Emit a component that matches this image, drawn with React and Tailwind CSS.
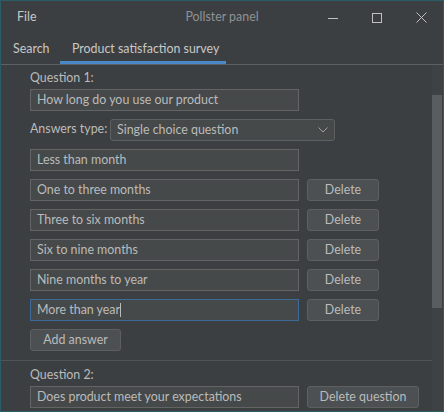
import React from "react";

const answers = [
  { text: "Less than month", del: false },
  { text: "One to three months", del: true },
  { text: "Three to six months", del: true },
  { text: "Six to nine months", del: true },
  { text: "Nine months to year", del: true },
  { text: "More than year", del: true, focus: true },
];

const inputCls = "h-[22px] w-[269px] shrink-0 border bg-[#45494a] px-[6px] flex items-center text-[#bbbbbb]";
const btnCls = "h-[22px] shrink-0 rounded-[3px] border border-[#5e6060] bg-[#4c5052] flex items-center justify-center text-[#bbbbbb]";

function Field({ children, focus }) {
  return (
    <div className={`${inputCls} ${focus ? "border-[#3d6a99]" : "border-[#646464]"}`}>
      {children}
      {focus && <span className="w-px h-[14px] bg-[#bbbbbb]" />}
    </div>
  );
}

export default function App() {
  return (
    <div
      className="w-[444px] h-[412px] border border-[#2b5d66] bg-[#3c3f41] text-[#bbbbbb] text-[12.4px] whitespace-nowrap flex flex-col overflow-hidden"
      style={{ fontFamily: 'Lato, "Noto Sans", sans-serif' }}
    >
      {/* title bar */}
      <div className="h-[33px] grid grid-cols-[1fr_auto_1fr] items-center">
        <div className="pl-[16px] text-[#c8c8c8]">File</div>
        <div className="text-[#8f9294]">Pollster panel</div>
        <div className="flex justify-end items-center pr-[16px] gap-[34px]">
          <svg width="10" height="10" viewBox="0 0 10 10"><path d="M0 5.5h10" stroke="#c0c0c0" strokeWidth="1" /></svg>
          <svg width="10" height="10" viewBox="0 0 10 10"><rect x="0.5" y="0.5" width="9" height="9" fill="none" stroke="#c0c0c0" /></svg>
          <svg width="11" height="11" viewBox="0 0 11 11"><path d="M0.5 0.5l10 10M10.5 0.5l-10 10" stroke="#c0c0c0" /></svg>
        </div>
      </div>

      {/* tabs */}
      <div className="h-[31px] flex border-b border-[#5d6063]">
        <div className="pl-[12px] w-[59px] flex items-center text-[#c8c8c8]">Search</div>
        <div className="w-[166px] pl-[12px] flex items-center border-b-[3px] border-[#4a88c7] pt-[3px] text-[#c8c8c8]">
          Product satisfaction survey
        </div>
      </div>

      {/* content */}
      <div className="flex-1 flex min-h-0">
        <div className="flex-1 min-w-0">
          <div className="pl-[29px] pt-[3px]">
            <div className="h-[20px] flex items-center">Question 1:</div>
            <div className="mt-[1px]">
              <Field>How long do you use our product</Field>
            </div>
            <div className="mt-[8px] flex items-center">
              <div className="w-[80px] shrink-0 -mt-[2px]">Answers type:</div>
              <div className="h-[22px] w-[225px] shrink-0 rounded-[3px] border border-[#5e6060] bg-[#45494a] flex items-center justify-between px-[6px]">
                <span>Single choice question</span>
                <svg width="10" height="6" viewBox="0 0 10 6"><path d="M0.5 0.5l4.5 4.5 4.5-4.5" fill="none" stroke="#a0a0a0" /></svg>
              </div>
            </div>
            <div className="mt-[8px] flex flex-col gap-[8px]">
              {answers.map((a) => (
                <div key={a.text} className="flex items-center gap-[8px]">
                  <Field focus={a.focus}>{a.text}</Field>
                  {a.del && <div className={`${btnCls} w-[72px]`}>Delete</div>}
                </div>
              ))}
            </div>
            <div className={`${btnCls} w-[91px] mt-[8px]`}>Add answer</div>
          </div>
          <div className="mt-[9px] h-px bg-[#505356]" />
          <div className="pl-[29px] pt-[4px]">
            <div className="h-[20px] flex items-center">Question 2:</div>
            <div className="mt-[1px] flex items-center gap-[8px]">
              <Field>Does product meet your expectations</Field>
              <div className={`${btnCls} w-[112px]`}>Delete question</div>
            </div>
          </div>
        </div>
        <div className="w-[10px] mr-px bg-[#3f4244]">
          <div className="mt-[30px] h-[213px] bg-[#5a5d60]" />
        </div>
      </div>
    </div>
  );
}
